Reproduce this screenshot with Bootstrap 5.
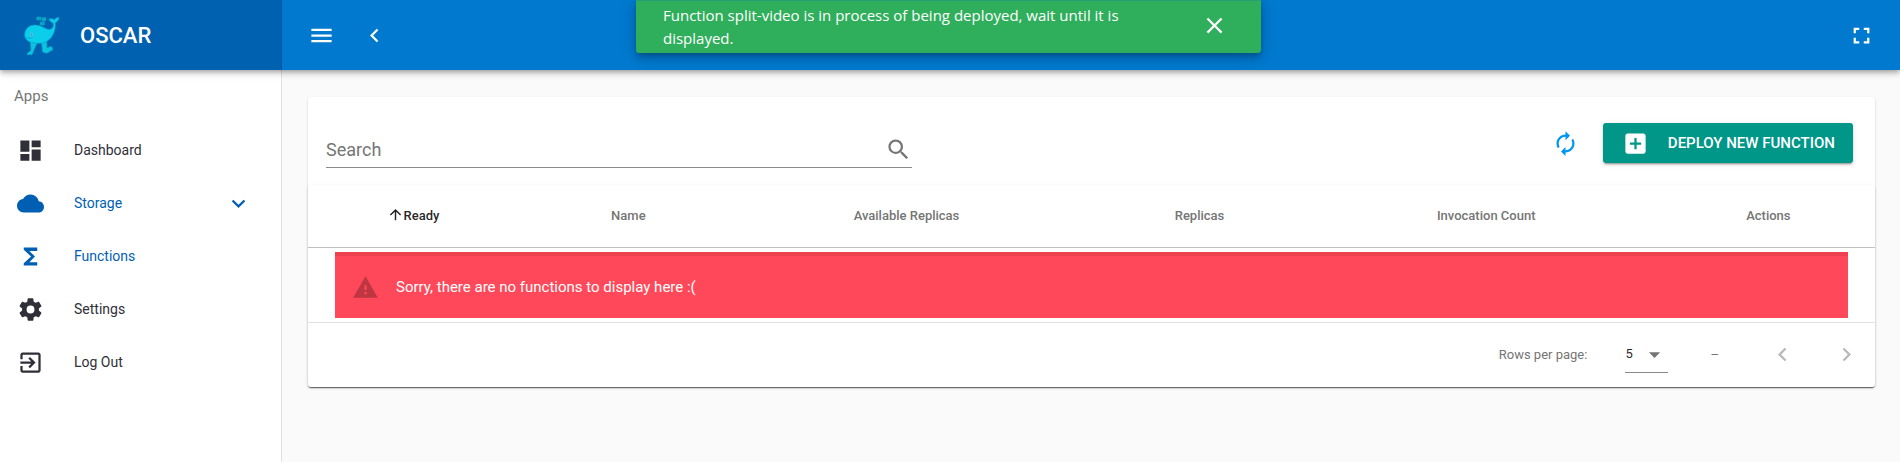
<!DOCTYPE html>
<html lang="en">
<head>
<meta charset="utf-8">
<meta name="viewport" content="width=device-width, initial-scale=1">
<title>OSCAR</title>
<link rel="stylesheet" href="https://cdn.jsdelivr.net/npm/bootstrap@5.3.0/dist/css/bootstrap.min.css">
<style>
  body { font-family: Roboto, "Liberation Sans", sans-serif; background: #fafafa; color: rgba(0,0,0,.87); }
  .ico { width: 27px; height: 27px; fill: currentColor; display: block; flex: none; }
  .side { width: 282px; }
  .topbar { height: 70px; background: #0079ce; box-shadow: 0 2px 4px -1px rgba(0,0,0,.2), 0 4px 5px rgba(0,0,0,.14), 0 1px 10px rgba(0,0,0,.12); z-index: 3; }
  .brand { background: #0061b0; border-right: 1px solid #0055a0; padding-left: 16px; gap: 14px; font-size: 22px; font-weight: 500; }
  .logo { width: 50px; height: 52px; }
  .bar-tools { padding: 0 25px 0 26px; gap: 26px; }
  .plain { border: 0; background: none; padding: 0; color: inherit; }
  .sidebar { background: #fff; border-right: 1px solid #e0e0e0; }
  .side-head { font-size: 15px; line-height: 24px; padding: 14px 14px 16px; color: #757575; }
  .side-link { height: 53px; padding: 0 29px 0 17px; gap: 30px; font-size: 14px; color: #2f2f38; text-decoration: none; }
  .side-link.current { color: #005fb3; }
  .notice { top: 0; left: 636px; width: 625px; height: 53px; padding: 0 33px 0 27px; background: #2fae5b; border-top: 1px solid #27a077; border-radius: 0 0 3px 3px; font: 15px/23px "Open Sans", "Noto Sans", sans-serif; z-index: 5; box-shadow: 0 3px 5px -1px rgba(0,0,0,.2), 0 6px 10px rgba(0,0,0,.14), 0 1px 18px rgba(0,0,0,.12); }
  .notice p { width: 460px; }
  .notice button { padding-bottom: 3px; }
  .panel, .grid-box { background: #fff; border-radius: 3px; box-shadow: 0 2px 1px -1px rgba(0,0,0,.2), 0 1px 1px rgba(0,0,0,.14), 0 1px 3px rgba(0,0,0,.12); }
  .panel { margin: 27px 25px 27px 26px; }
  .tools { height: 88px; padding: 4px 22px 0 18px; }
  .search { width: 38.4%; height: 36px; margin-top: 13px; border-bottom: 1px solid #8a8a8a; color: #757575; }
  .search input { border: 0; outline: 0; background: none; font-size: 18px; padding: 0; color: inherit; }
  .search input::placeholder { color: #757575; opacity: 1; }
  .refresh { color: #0096f2; }
  .deploy { height: 40px; padding: 0 18px 0 19px; gap: 19px; background: #009688; color: #fff; border-radius: 3px; font-size: 15px; font-weight: 500; box-shadow: 0 3px 1px -2px rgba(0,0,0,.2), 0 2px 2px rgba(0,0,0,.14), 0 1px 5px rgba(0,0,0,.12); }
  .fn-table { table-layout: fixed; width: 100%; }
  .fn-table th { height: 62px; font-size: 13px; font-weight: 500; color: #757575; text-align: center; vertical-align: middle; border-bottom: 1px solid #c0c0c0; }
  .fn-table th.sorted { color: rgba(0,0,0,.87); padding-right: 15px; }
  .fn-table th.sorted svg { vertical-align: -3px; }
  .c-ready { width: 224px; } .c-name { width: 12.3%; } .c-avail { width: 23.2%; } .c-repl { width: 14.2%; } .c-inv { width: 22.4%; }
  .fn-table td { padding: 4px 27px; border-bottom: 1px solid #e0e0e0; }
  .empty { height: 66px; background: #ff4859; border-top: 4px solid #ee414f; padding: 2px 0 0 17px; gap: 17px; color: #fff; font-size: 15px; }
  .empty .ico { color: #bf3643; }
  .pager { height: 64px; padding-right: 15px; font-size: 13px; color: #757575; }
  .rows { width: 43px; height: 36px; margin: 0 42px 0 38px; border-bottom: 1px solid #8a8a8a; }
  .rows select { appearance: none; border: 0; background: none; width: 100%; height: 35px; font-size: 13px; padding: 0; color: rgba(0,0,0,.87); outline: 0; }
  .rows .ico { right: 0; top: 4px; pointer-events: none; }
  .pager button { color: #b8b8b8; }
  .pager .prev { margin: 0 37px 0 50px; }
</style>
<script src="https://cdn.jsdelivr.net/npm/bootstrap@5.3.0/dist/js/bootstrap.bundle.min.js"></script>
</head>
<body class="d-flex flex-column min-vh-100">
<header class="topbar d-flex position-relative text-white">
  <div class="brand side d-flex align-items-center flex-shrink-0">
    <svg class="logo" viewBox="0 0 150 156" aria-hidden="true">
      <g fill="#06a5c4">
        <path d="M61 23h14v11H61zM77 25h13v12H77zM72 38h14v11H72z"/>
      </g>
      <path d="M43 98l20 4-15 35H33l3-6 9-7zM76 98l16-3 1 22 13-5 5 10-19 11-12-4z" fill="#0bc3e0" stroke="#06a5c4" stroke-width="2"/>
      <path d="M26 78c0-18 13-30 31-30 17 0 27 9 38 13 13 3 20-8 16-19-4-2-10-5-12-12 7-2 12 0 16 3 3-5 8-8 14-8-1 8-5 13-11 16 2 34-17 62-50 62-26 0-42-9-42-25z" fill="#0bcdec" stroke="#06a5c4" stroke-width="2"/>
      <path d="M28 84c9 6 19 4 24-1" fill="none" stroke="#06a5c4" stroke-width="2"/>
      <circle cx="47" cy="77" r="5" fill="#6fc2df"/><circle cx="47" cy="77" r="2" fill="#087c9f"/>
    </svg>
    <span>OSCAR</span>
  </div>
  <div class="bar-tools d-flex flex-grow-1 align-items-center">
    <button class="plain" aria-label="Menu"><svg class="ico" viewBox="0 0 24 24"><path d="M3 18h18v-2H3v2zm0-5h18v-2H3v2zm0-7v2h18V6H3z"/></svg></button>
    <button class="plain" aria-label="Back"><svg class="ico" viewBox="0 0 24 24"><path d="M15.41 7.41L14 6l-6 6 6 6 1.41-1.41L10.83 12z"/></svg></button>
    <button class="plain ms-auto" aria-label="Full screen"><svg class="ico" viewBox="0 0 24 24"><path d="M7 14H5v5h5v-2H7v-3zm-2-4h2V7h3V5H5v5zm12 7h-3v2h5v-5h-2v3zM14 5v2h3v3h2V5h-5z"/></svg></button>
  </div>
</header>
<div class="notice position-absolute d-flex align-items-center justify-content-between text-white" role="status">
  <p class="m-0">Function split-video is in process of being deployed, wait until it is displayed.</p>
  <button class="plain" aria-label="Close"><svg class="ico" viewBox="0 0 24 24"><path d="M19 6.41L17.59 5 12 10.59 6.41 5 5 6.41 10.59 12 5 17.59 6.41 19 12 13.41 17.59 19 19 17.59 13.41 12z"/></svg></button>
</div>
<div class="d-flex flex-grow-1">
  <nav class="sidebar side flex-shrink-0">
    <div class="side-head">Apps</div>
    <a class="side-link d-flex align-items-center" href="#"><svg class="ico" viewBox="0 0 24 24"><path d="M3 13h8V3H3v10zm0 8h8v-6H3v6zm10 0h8V11h-8v10zm0-18v6h8V3h-8z"/></svg>Dashboard</a>
    <a class="side-link current d-flex align-items-center" href="#"><svg class="ico" viewBox="0 0 24 24"><path d="M19.35 10.04C18.67 6.59 15.64 4 12 4 9.11 4 6.6 5.64 5.35 8.04 2.34 8.36 0 10.91 0 14c0 3.31 2.69 6 6 6h13c2.76 0 5-2.24 5-5 0-2.64-2.05-4.78-4.65-4.96z"/></svg>Storage<svg class="ico ms-auto" viewBox="0 0 24 24"><path d="M7.41 8.58L12 13.17l4.59-4.59L18 10l-6 6-6-6z"/></svg></a>
    <a class="side-link current d-flex align-items-center" href="#"><svg class="ico" viewBox="0 0 24 24"><path d="M18 4H6v2l6.5 6L6 18v2h12v-3h-7l5-5-5-5h7z"/></svg>Functions</a>
    <a class="side-link d-flex align-items-center" href="#"><svg class="ico" viewBox="0 0 24 24"><path d="M12 15.5A3.5 3.5 0 0 1 8.5 12 3.5 3.5 0 0 1 12 8.5a3.5 3.5 0 0 1 3.5 3.5 3.5 3.5 0 0 1-3.5 3.5m7.43-2.53c.04-.32.07-.64.07-.97s-.03-.66-.07-1l2.11-1.63c.19-.15.24-.42.12-.64l-2-3.46c-.12-.22-.39-.31-.61-.22l-2.49 1c-.52-.39-1.06-.73-1.69-.98l-.37-2.65A.506.506 0 0 0 14 2h-4c-.25 0-.46.18-.5.42l-.37 2.65c-.63.25-1.17.59-1.69.98l-2.49-1c-.22-.09-.49 0-.61.22l-2 3.46c-.13.22-.07.49.12.64L4.57 11c-.04.34-.07.67-.07 1s.03.65.07.97l-2.11 1.66c-.19.15-.25.42-.12.64l2 3.46c.12.22.39.3.61.22l2.49-1.01c.52.4 1.06.74 1.69.99l.37 2.65c.04.24.25.42.5.42h4c.25 0 .46-.18.5-.42l.37-2.65c.63-.26 1.17-.59 1.69-.99l2.49 1.01c.22.08.49 0 .61-.22l2-3.46c.12-.22.07-.49-.12-.64z"/></svg>Settings</a>
    <a class="side-link d-flex align-items-center" href="#"><svg class="ico" viewBox="0 0 24 24"><path d="M10.09 15.59L11.5 17l5-5-5-5-1.41 1.41L12.67 11H3v2h9.67l-2.58 2.59zM19 3H5c-1.11 0-2 .9-2 2v4h2V5h14v14H5v-4H3v4c0 1.1.89 2 2 2h14c1.1 0 2-.9 2-2V5c0-1.1-.9-2-2-2z"/></svg>Log Out</a>
  </nav>
  <main class="flex-grow-1">
    <section class="panel">
      <div class="tools d-flex align-items-center">
        <label class="search d-flex align-items-center">
          <input class="flex-grow-1" type="text" placeholder="Search" aria-label="Search">
          <svg class="ico" viewBox="0 0 24 24"><path d="M9.5 3A6.5 6.5 0 0 1 16 9.5c0 1.61-.59 3.09-1.56 4.23l.27.27h.79l5 5-1.5 1.5-5-5v-.79l-.27-.27A6.516 6.516 0 0 1 9.5 16 6.5 6.5 0 0 1 3 9.5 6.5 6.5 0 0 1 9.5 3m0 2C7 5 5 7 5 9.5S7 14 9.5 14 14 12 14 9.5 12 5 9.5 5z"/></svg>
        </label>
        <button class="plain refresh ms-auto me-4" aria-label="Refresh"><svg class="ico" viewBox="0 0 24 24"><path d="M12 6v3l4-4-4-4v3c-4.42 0-8 3.58-8 8 0 1.57.46 3.03 1.24 4.26L6.7 14.8A5.87 5.87 0 0 1 6 12c0-3.31 2.69-6 6-6zm6.76 1.74L17.3 9.2c.44.84.7 1.79.7 2.8 0 3.31-2.69 6-6 6v-3l-4 4 4 4v-3c4.42 0 8-3.58 8-8 0-1.57-.46-3.03-1.24-4.26z"/></svg></button>
        <button class="deploy border-0 d-flex align-items-center"><svg class="ico" viewBox="0 0 24 24"><path d="M19 3H5c-1.11 0-2 .9-2 2v14c0 1.1.89 2 2 2h14c1.1 0 2-.9 2-2V5c0-1.1-.9-2-2-2zm-2 10h-4v4h-2v-4H7v-2h4V7h2v4h4v2z"/></svg><span>DEPLOY NEW FUNCTION</span></button>
      </div>
      <div class="grid-box">
        <table class="fn-table">
          <colgroup><col class="c-ready"><col class="c-name"><col class="c-avail"><col class="c-repl"><col class="c-inv"><col></colgroup>
          <thead><tr>
            <th class="sorted"><svg width="17" height="17" viewBox="0 0 24 24" fill="currentColor"><path d="M13 20h-2V8l-5.5 5.5-1.42-1.42L12 4.16l7.92 7.92-1.42 1.42L13 8z"/></svg>Ready</th>
            <th>Name</th><th>Available Replicas</th><th>Replicas</th><th>Invocation Count</th><th>Actions</th>
          </tr></thead>
          <tbody><tr><td colspan="6">
            <div class="empty d-flex align-items-center"><svg class="ico" viewBox="0 0 24 24"><path d="M1 21h22L12 2 1 21zm12-3h-2v-2h2v2zm0-4h-2v-4h2v4z"/></svg>Sorry, there are no functions to display here :(</div>
          </td></tr></tbody>
        </table>
        <div class="pager d-flex align-items-center justify-content-end">
          <label for="rows">Rows per page:</label>
          <div class="rows position-relative"><select id="rows"><option>5</option><option>10</option><option>25</option></select><svg class="ico position-absolute" viewBox="0 0 24 24"><path d="M7 10l5 5 5-5z"/></svg></div>
          <span>–</span>
          <button class="plain prev" aria-label="Previous page"><svg class="ico" viewBox="0 0 24 24"><path d="M15.41 7.41L14 6l-6 6 6 6 1.41-1.41L10.83 12z"/></svg></button>
          <button class="plain" aria-label="Next page"><svg class="ico" viewBox="0 0 24 24"><path d="M8.59 16.59L13.17 12 8.59 7.41 10 6l6 6-6 6z"/></svg></button>
        </div>
      </div>
    </section>
  </main>
</div>
</body>
</html>
